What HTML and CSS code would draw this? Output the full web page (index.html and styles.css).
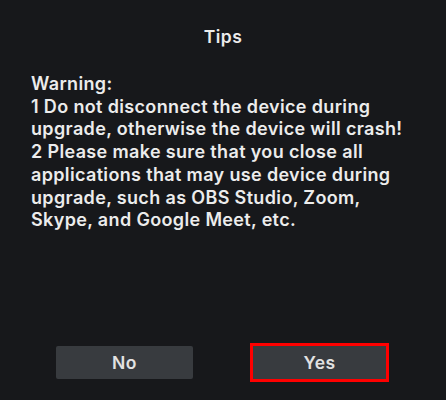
FILE: index.html
```html
<!DOCTYPE html>
<html>
<head>
<meta charset="utf-8">
<link rel="stylesheet" href="styles.css">
</head>
<body>
<div class="dialog">
  <div class="title">Tips</div>
  <div class="message">
    Warning:<br>
    1 Do not disconnect the device during<br>
    upgrade, otherwise the device will crash!<br>
    2 Please make sure that you close all<br>
    applications that may use device during<br>
    upgrade, such as OBS Studio, Zoom,<br>
    Skype, and Google Meet, etc.
  </div>
  <div class="actions">
    <button class="btn">No</button>
    <button class="btn btn-focus">Yes</button>
  </div>
</div>
</body>
</html>
```
FILE: styles.css
```css
html, body {
  margin: 0;
  padding: 0;
  background: #17181b;
}
.dialog {
  width: 446px;
  height: 400px;
  display: flex;
  flex-direction: column;
  font-family: Inter, "Open Sans", sans-serif;
  color: #ececec;
}
.title {
  text-align: center;
  font-size: 17.5px;
  font-weight: 600;
  letter-spacing: 0.5px;
  margin-top: 26px;
  line-height: 22px;
}
.message {
  margin-top: 25px;
  padding: 0 31px;
  font-size: 18px;
  line-height: 22.7px;
  font-weight: 600;
  letter-spacing: 0.35px;
  white-space: nowrap;
}
.actions {
  margin-top: auto;
  margin-bottom: 21px;
  display: flex;
  padding-left: 56px;
  gap: 60px;
}
.btn {
  width: 137px;
  height: 33px;
  border: none;
  border-radius: 2px;
  background: #383b3f;
  color: #e2e2e2;
  font-family: Inter, "Open Sans", sans-serif;
  font-size: 17.5px;
  font-weight: 600;
  letter-spacing: 0.5px;
  padding: 0;
}
.btn-focus {
  width: 133px;
  border-radius: 0;
  outline: 3px solid #ff0000;
}
```
